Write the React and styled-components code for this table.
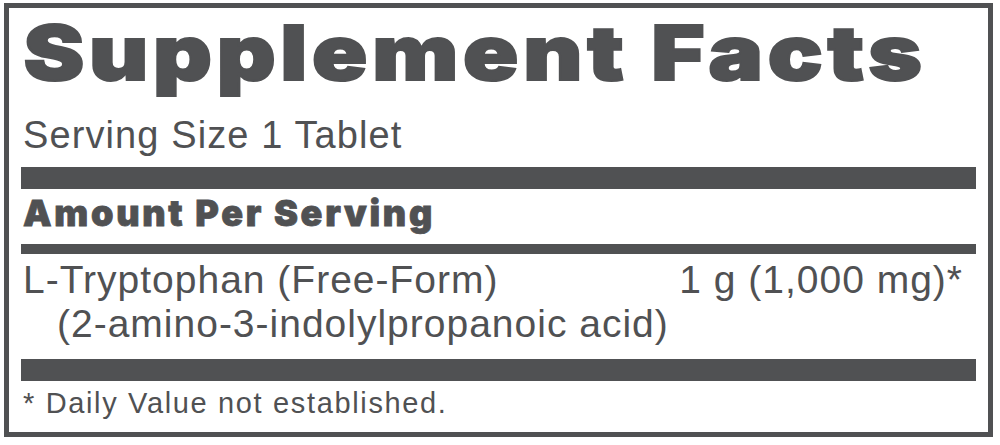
import React from "react";
import styled, { createGlobalStyle } from "styled-components";

const GlobalStyle = createGlobalStyle`
  html, body { margin: 0; padding: 0; background: #ffffff; }
  body { font-family: "Liberation Sans", Arial, sans-serif; }
`;

const ink = "#505153";

const Panel = styled.section`
  box-sizing: border-box;
  width: 989px;
  height: 434px;
  margin: 3px 0 0 4px;
  border: 5px solid ${ink};
  padding: 4px 12px 0 12px;
  display: flex;
  flex-direction: column;
  color: ${ink};
  overflow: hidden;
`;

const Title = styled.h1`
  align-self: flex-start;
  margin: 0;
  font-family: Inter, "Liberation Sans", sans-serif;
  font-weight: 900;
  font-size: 76px;
  line-height: 80px;
  letter-spacing: 4px;
  -webkit-text-stroke: 2px ${ink};
  padding-left: 2px;
  white-space: nowrap;
  transform: scaleX(1.2);
  transform-origin: left center;
`;

const Text = styled.div`
  font-family: "Liberation Sans", Arial, sans-serif;
  font-size: ${(p) => p.$size || 38}px;
  line-height: ${(p) => p.$lh || 44}px;
  letter-spacing: ${(p) => p.$ls ?? 1}px;
  margin-top: ${(p) => p.$mt || 0}px;
  padding-left: ${(p) => p.$indent || 2}px;
  white-space: nowrap;
`;

const Bar = styled.div`
  height: ${(p) => p.$h}px;
  margin-top: ${(p) => p.$mt}px;
  background: ${ink};
`;

const Heading = styled.div`
  margin-top: 4px;
  padding-left: 2px;
  font-family: Inter, "Liberation Sans", sans-serif;
  font-weight: 900;
  font-size: 36px;
  line-height: 40px;
  letter-spacing: 2.7px;
  -webkit-text-stroke: 0.8px ${ink};
  white-space: nowrap;
`;

const Row = styled.div`
  display: flex;
  justify-content: space-between;
  align-items: flex-start;
  margin-top: 4px;
`;

const Amount = styled.div`
  font-family: "Liberation Sans", Arial, sans-serif;
  font-size: 39px;
  line-height: 44px;
  letter-spacing: 1px;
  padding-right: 13px;
  white-space: nowrap;
`;

export default function App() {
  return (
    <>
      <GlobalStyle />
      <Panel>
        <Title>Supplement Facts</Title>
        <Text $mt={21} $ls={1.1}>Serving Size 1 Tablet</Text>
        <Bar $h={22} $mt={10} />
        <Heading>Amount Per Serving</Heading>
        <Bar $h={10} $mt={11} />
        <Row>
          <div>
            <Text $size={39}>L-Tryptophan (Free-Form)</Text>
            <Text $size={39} $indent={36}>(2-amino-3-indolylpropanoic acid)</Text>
          </div>
          <Amount>1 g (1,000 mg)*</Amount>
        </Row>
        <Bar $h={22} $mt={13} />
        <Text $size={29} $lh={34} $ls={1.65} $mt={5}>
          * Daily Value not established.
        </Text>
      </Panel>
    </>
  );
}
